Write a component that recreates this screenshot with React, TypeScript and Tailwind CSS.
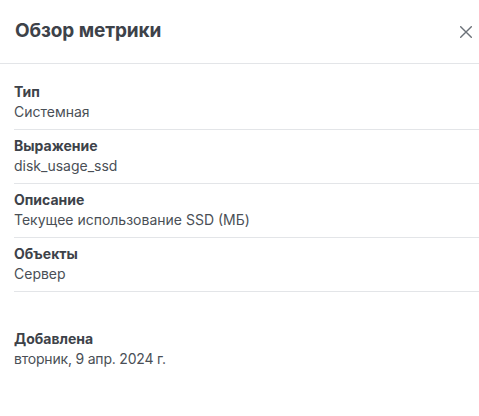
import React from "react";

const rows = [
  { label: "Тип", value: "Системная" },
  { label: "Выражение", value: "disk_usage_ssd" },
  { label: "Описание", value: "Текущее использование SSD (МБ)" },
  { label: "Объекты", value: "Сервер" },
];

export default function App() {
  return (
    <div
      className="w-[479px] h-[416px] bg-white text-[#42474e] overflow-hidden"
      style={{ fontFamily: "Inter, 'Noto Sans', sans-serif" }}
    >
      <div className="h-[64px] flex items-center justify-between pl-[15px] pr-[7px] border-b border-[#e3e5e8]">
        <h1 className="text-[19px] font-bold text-[#3d4249] tracking-[-0.1px]">Обзор метрики</h1>
        <button className="w-[12px] h-[12px] flex items-center justify-center text-[#6b7178]">
          <svg width="12" height="12" viewBox="0 0 12 12" fill="none" stroke="currentColor" strokeWidth="1.4" strokeLinecap="round">
            <path d="M0.7 0.7L11.3 11.3M11.3 0.7L0.7 11.3" />
          </svg>
        </button>
      </div>
      <div className="pl-[14px] pt-[12px]">
        {rows.map((r) => (
          <div key={r.label} className="pt-[6px] pb-[7px] border-b border-[#e3e5e8]">
            <div className="text-[14px] leading-[20px] font-bold text-[#3d4249]">{r.label}</div>
            <div className="text-[14px] leading-[20px] text-[#4a4f56]">{r.value}</div>
          </div>
        ))}
        <div className="pt-[37px]">
          <div className="text-[14px] leading-[20px] font-bold text-[#3d4249]">Добавлена</div>
          <div className="text-[14px] leading-[20px] text-[#4a4f56] tracking-[-0.2px]">вторник, 9 апр. 2024 г.</div>
        </div>
      </div>
    </div>
  );
}
